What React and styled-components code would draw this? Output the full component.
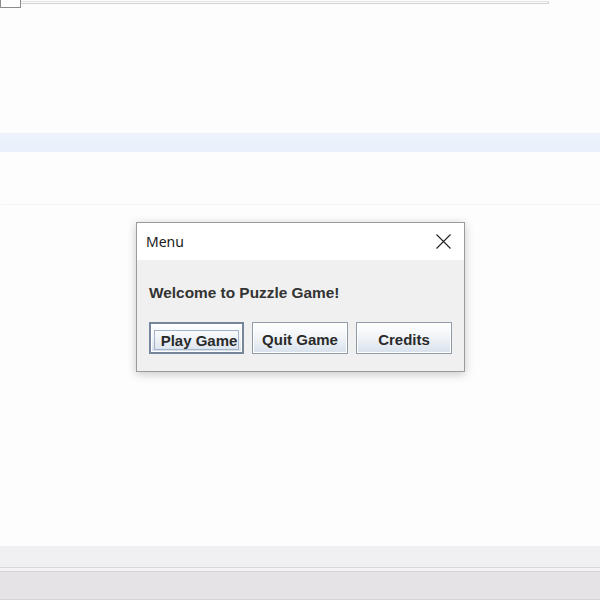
import React from 'react';
import styled, { createGlobalStyle } from 'styled-components';

const GlobalStyle = createGlobalStyle`
  * {
    margin: 0;
    padding: 0;
    box-sizing: border-box;
  }
  body {
    width: 600px;
    height: 600px;
    overflow: hidden;
    background: #fefdfe;
    font-family: 'Liberation Sans', Arial, sans-serif;
  }
`;

const Screen = styled.div`
  display: flex;
  flex-direction: column;
  width: 600px;
  height: 600px;
`;

const EditorTop = styled.div`
  height: 133px;
  display: flex;
  align-items: flex-start;
`;

const TabStub = styled.div`
  width: 21px;
  height: 8px;
  border: 1px solid #8c8c8c;
  border-top: none;
  background: #fff;
`;

const RulerLine = styled.div`
  width: 528px;
  height: 3px;
  margin-top: 1px;
  border-top: 1px solid #e2e2e4;
  border-bottom: 1px solid #d2d2d6;
  border-right: 1px solid #d0d0d4;
`;

const HighlightBand = styled.div`
  height: 19px;
  background: linear-gradient(180deg, #eef3fb, #e7f0fc);
`;

const Workspace = styled.div`
  flex: 1;
  display: flex;
  flex-direction: column;
  align-items: center;
  padding-top: 52px;
  padding-left: 1px;
`;

const FaintRule = styled.div`
  align-self: stretch;
  height: 1px;
  margin-bottom: 17px;
  background: #f6f5f2;
`;

const Dialog = styled.div`
  width: 329px;
  border: 1px solid #9b9b9b;
  background: #f0f0f0;
  box-shadow: 0 2px 9px rgba(0, 0, 0, 0.22);
`;

const TitleBar = styled.div`
  height: 37px;
  background: #fff;
  display: flex;
  align-items: center;
  justify-content: space-between;
  padding: 0 12px 0 9px;
`;

const Title = styled.span`
  font-family: 'Noto Sans', 'Open Sans', sans-serif;
  font-size: 14px;
  color: #1a1a1a;
`;

const CloseButton = styled.span`
  display: flex;
  width: 17px;
  height: 17px;
`;

const Body = styled.div`
  padding: 24px 12px 17px 12px;
`;

const Welcome = styled.p`
  font-size: 15.4px;
  font-weight: bold;
  color: #333;
  line-height: 18px;
  margin-bottom: 20px;
`;

const ButtonRow = styled.div`
  display: flex;
  gap: 8px;
`;

const Button = styled.button`
  width: ${(p) => p.$w}px;
  height: 32px;
  display: flex;
  align-items: center;
  justify-content: center;
  padding-top: 3px;
  font-family: 'Liberation Sans', Arial, sans-serif;
  font-size: 15px;
  font-weight: bold;
  color: #2a2a2a;
  background: linear-gradient(180deg, #ffffff 0%, #f2f5f9 45%, #d8e1ec 100%);
  border: ${(p) => (p.$focused ? '2px solid #76859a' : '1px solid #8e9aa8')};
  box-shadow: inset 0 0 0 1px #ffffff;
`;

const FocusRing = styled.span`
  padding: 1px 1px 0 6px;
  border: 1px solid #a3b3c8;
`;

const StatusBar = styled.div`
  height: 22px;
  background: #f0eff1;
  border-bottom: 1px solid #d9d7db;
`;

const Divider = styled.div`
  height: 4px;
  background: #f3f2f4;
  border-bottom: 1px solid #d5d3d7;
`;

const TaskStrip = styled.div`
  height: 28px;
  background: #e5e3e6;
  border-bottom: 1px solid #d6d4d8;
`;

const CloseIcon = () => (
  <svg width="17" height="17" viewBox="0 0 17 17">
    <path d="M1.5 1.5 L15.5 15.5 M15.5 1.5 L1.5 15.5" stroke="#222" strokeWidth="1.1" fill="none" />
  </svg>
);

const App = () => (
  <>
    <GlobalStyle />
    <Screen>
      <EditorTop>
        <TabStub />
        <RulerLine />
      </EditorTop>
      <HighlightBand />
      <Workspace>
        <FaintRule />
        <Dialog>
          <TitleBar>
            <Title>Menu</Title>
            <CloseButton>
              <CloseIcon />
            </CloseButton>
          </TitleBar>
          <Body>
            <Welcome>Welcome to Puzzle Game!</Welcome>
            <ButtonRow>
              <Button $w={95} $focused>
                <FocusRing>Play Game</FocusRing>
              </Button>
              <Button $w={96}>Quit Game</Button>
              <Button $w={96}>Credits</Button>
            </ButtonRow>
          </Body>
        </Dialog>
      </Workspace>
      <StatusBar />
      <Divider />
      <TaskStrip />
    </Screen>
  </>
);

export default App;
